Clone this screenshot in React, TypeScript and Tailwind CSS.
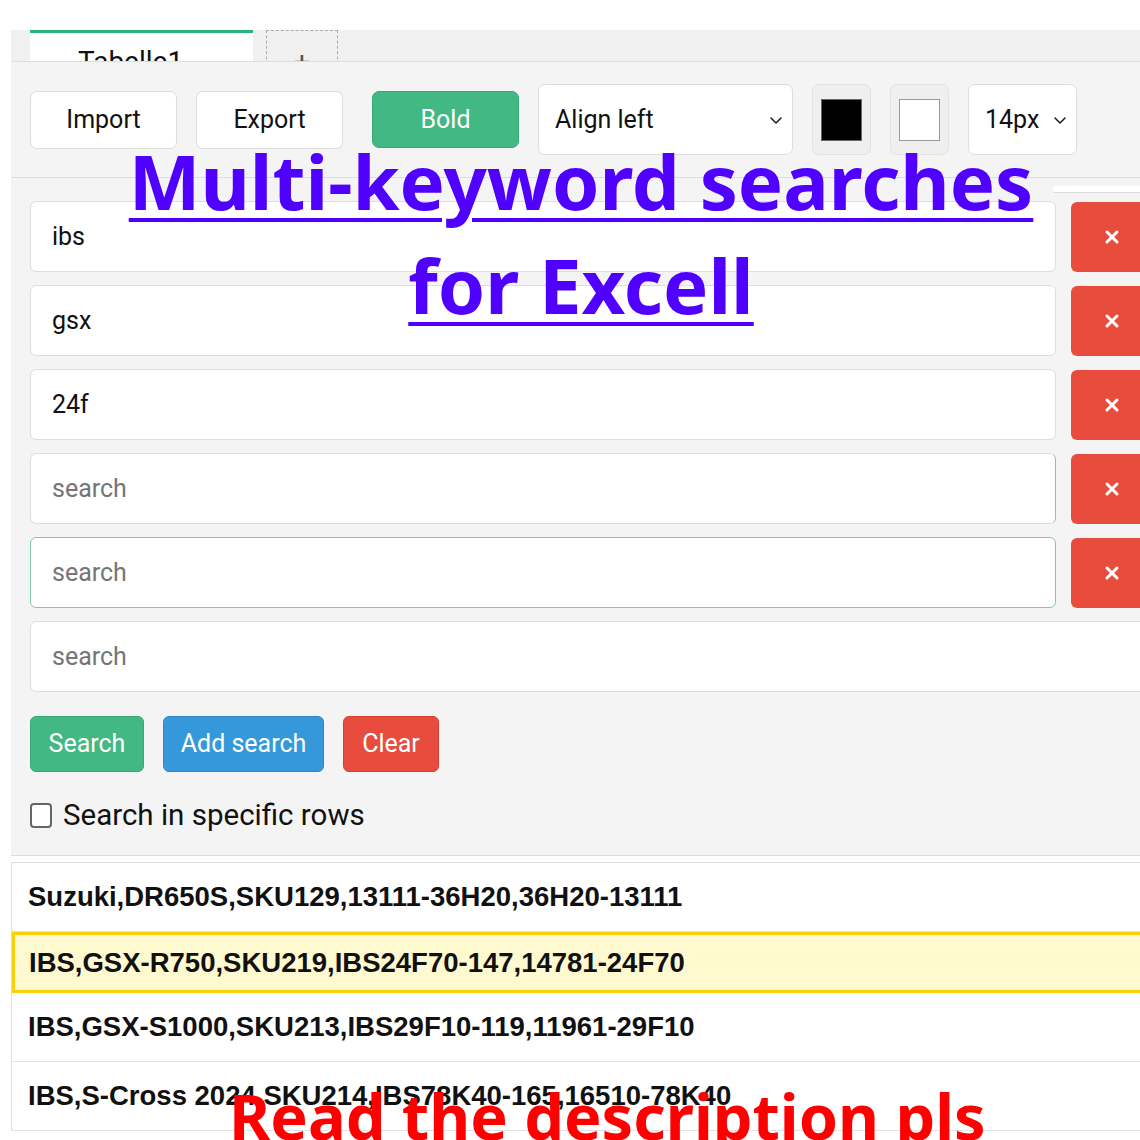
import React, { useState } from 'react';

const rows = [
  { text: 'Suzuki,DR650S,SKU129,13111-36H20,36H20-13111', active: false },
  { text: 'IBS,GSX-R750,SKU219,IBS24F70-147,14781-24F70', active: true },
  { text: 'IBS,GSX-S1000,SKU213,IBS29F10-119,11961-29F10', active: false },
  { text: 'IBS,S-Cross 2024,SKU214,IBS78K40-165,16510-78K40', active: false },
];

const ui = { fontFamily: 'Roboto, "Liberation Sans", Arial, sans-serif' };

const Chevron: React.FC = () => (
  <svg className="pointer-events-none absolute right-[9px] top-1/2 h-[16px] w-[16px] -translate-y-1/2 text-[#222]" viewBox="0 0 16 16" fill="none" stroke="currentColor" strokeWidth={1.6}>
    <path d="M3 6l5 5 5-5" strokeLinecap="round" strokeLinejoin="round" />
  </svg>
);

const App: React.FC = () => {
  const [terms, setTerms] = useState(['ibs', 'gsx', '24f', '', '', '']);
  const [specific, setSpecific] = useState(false);

  const update = (i: number, v: string) => setTerms((t) => t.map((x, j) => (j === i ? v : x)));

  return (
    <div className="relative h-[1140px] w-[1140px] overflow-hidden bg-white pl-[11px] pt-[30px]" style={ui}>
      <div className="w-[1161px] bg-[#f4f4f4]">
        {/* Sheet tabs */}
        <div className="flex h-[31px] items-start gap-[13px] overflow-hidden bg-[#f0f0f0] pl-[19px]">
          <div className="h-[31px] w-[223px] border-t-[3px] border-[#2bb37a] bg-white pl-[48px] pt-[15px] text-[28px] leading-[28px] text-[#111]">
            Tabelle1
          </div>
          <div className="h-[40px] w-[72px] border border-dashed border-[#aaa] pt-[17px] text-center text-[28px] leading-[28px] text-[#555]">
            +
          </div>
        </div>

        {/* Toolbar */}
        <div className="flex h-[117px] items-center gap-[19px] border-y border-[#dddddd] px-[19px]">
          <button className="h-[58px] w-[147px] rounded-[7px] border border-[#dddddd] bg-white text-[25px] text-[#111]">Import</button>
          <button className="h-[58px] w-[147px] rounded-[7px] border border-[#dddddd] bg-white text-[25px] text-[#111]">Export</button>
          <button className="ml-[10px] h-[57px] w-[147px] rounded-[7px] border border-[#3aa876] bg-[#42b883] text-[25px] text-white">Bold</button>
          <div className="relative">
            <select className="h-[71px] w-[255px] appearance-none rounded-[7px] border border-[#dddddd] bg-white pl-[16px] text-[25px] text-[#111] outline-none" style={ui} defaultValue="left">
              <option value="left">Align left</option>
              <option value="center">Align center</option>
              <option value="right">Align right</option>
            </select>
            <Chevron />
          </div>
          <div className="flex h-[71px] w-[59px] items-center justify-center rounded-[7px] border border-[#e2e2e2] bg-[#efefef]">
            <div className="h-[42px] w-[41px] border border-[#666] bg-black" />
          </div>
          <div className="flex h-[71px] w-[59px] items-center justify-center rounded-[7px] border border-[#e2e2e2] bg-[#efefef]">
            <div className="h-[42px] w-[41px] border border-[#999] bg-white" />
          </div>
          <div className="relative">
            <select className="h-[71px] w-[109px] appearance-none rounded-[7px] border border-[#dddddd] bg-white pl-[16px] text-[25px] text-[#111] outline-none" style={ui} defaultValue="14">
              <option value="12">12px</option>
              <option value="14">14px</option>
              <option value="16">16px</option>
            </select>
            <Chevron />
          </div>
        </div>

        {/* Search terms */}
        <div className="flex flex-col border-b border-[#dddddd] px-[19px] pb-[23px] pt-[23px]">
          <div className="flex flex-col gap-[13px]">
            {terms.map((term, i) => {
              const last = i === terms.length - 1;
              const border =
                i === 4 ? 'border-[#7fcaa4]' : i === 3 ? 'border-y-[#dddddd] border-l-[#dddddd] border-r-[#7fcaa4]' : 'border-[#dddddd]';
              return (
                <div key={i} className="flex items-center gap-[15px]">
                  <input
                    value={term}
                    onChange={(e) => update(i, e.target.value)}
                    placeholder="search"
                    className={`h-[71px] min-w-0 flex-1 rounded-[6px] border bg-white px-[21px] text-[25px] text-[#111] outline-none placeholder:text-[#757575] ${border}`}
                    style={ui}
                  />
                  {!last && (
                    <button className="flex h-[70px] w-[82px] shrink-0 items-center justify-center rounded-[6px] bg-[#e74c3c] text-white">
                      <svg className="h-[16px] w-[16px]" viewBox="0 0 16 16" stroke="currentColor" strokeWidth={3} strokeLinecap="round">
                        <path d="M3 3l10 10M13 3L3 13" />
                      </svg>
                    </button>
                  )}
                </div>
              );
            })}
          </div>

          <div className="mt-[24px] flex gap-[19px]">
            <button className="h-[56px] w-[114px] rounded-[6px] border border-[#3aa876] bg-[#42b883] text-[25px] text-white">Search</button>
            <button className="h-[56px] w-[161px] rounded-[6px] border border-[#2e86c7] bg-[#3498db] text-[25px] text-white">Add search</button>
            <button className="h-[56px] w-[96px] rounded-[6px] border border-[#d6402f] bg-[#e74c3c] text-[25px] text-white">Clear</button>
          </div>

          <label className="mt-[26px] flex items-center gap-[11px] text-[29.5px] leading-[34px] text-[#111]">
            <input
              type="checkbox"
              checked={specific}
              onChange={(e) => setSpecific(e.target.checked)}
              className="h-[25px] w-[22px] appearance-none rounded-[4px] border-2 border-[#666] bg-white checked:bg-[#42b883]"
            />
            Search in specific rows
          </label>
        </div>

        {/* Results */}
        <div className="bg-white pt-[6px]">
          <div className="border-l border-t border-[#dddddd]" style={{ fontFamily: '"Liberation Sans", Arial, sans-serif' }}>
            {rows.map((row, i) =>
              row.active ? (
                <div key={i} className="flex h-[61px] items-center border-[3px] border-[#fccf0b] bg-[#fff9cf] pl-[14px] text-[27.5px] font-bold text-[#111]">
                  {row.text}
                </div>
              ) : (
                <div key={i} className="flex h-[69px] items-center border-b border-[#e2e2e2] pl-[16px] text-[27.5px] font-bold text-[#111]">
                  {row.text}
                </div>
              ),
            )}
          </div>
        </div>
      </div>

      {/* Overlays on the screenshot */}
      <div className="absolute left-[1053px] top-[186px] h-[7px] w-[100px] border-b border-[#dddddd] bg-white" />
      <div
        className="absolute left-[81px] top-[129px] w-[1000px] text-center text-[76px] font-bold leading-[104px] text-[#4f00ff] underline decoration-[4px] underline-offset-[8px]"
        style={{ fontFamily: '"Noto Sans", "Open Sans", sans-serif' }}
      >
        Multi-keyword searches
        <br />
        for Excell
      </div>
      <div
        className="absolute left-[229px] top-[1084px] whitespace-nowrap text-[63px] font-bold leading-[64px] text-[#ff0000]"
        style={{ fontFamily: '"Noto Sans", "Open Sans", sans-serif' }}
      >
        Read the description pls
      </div>
    </div>
  );
};

export default App;
